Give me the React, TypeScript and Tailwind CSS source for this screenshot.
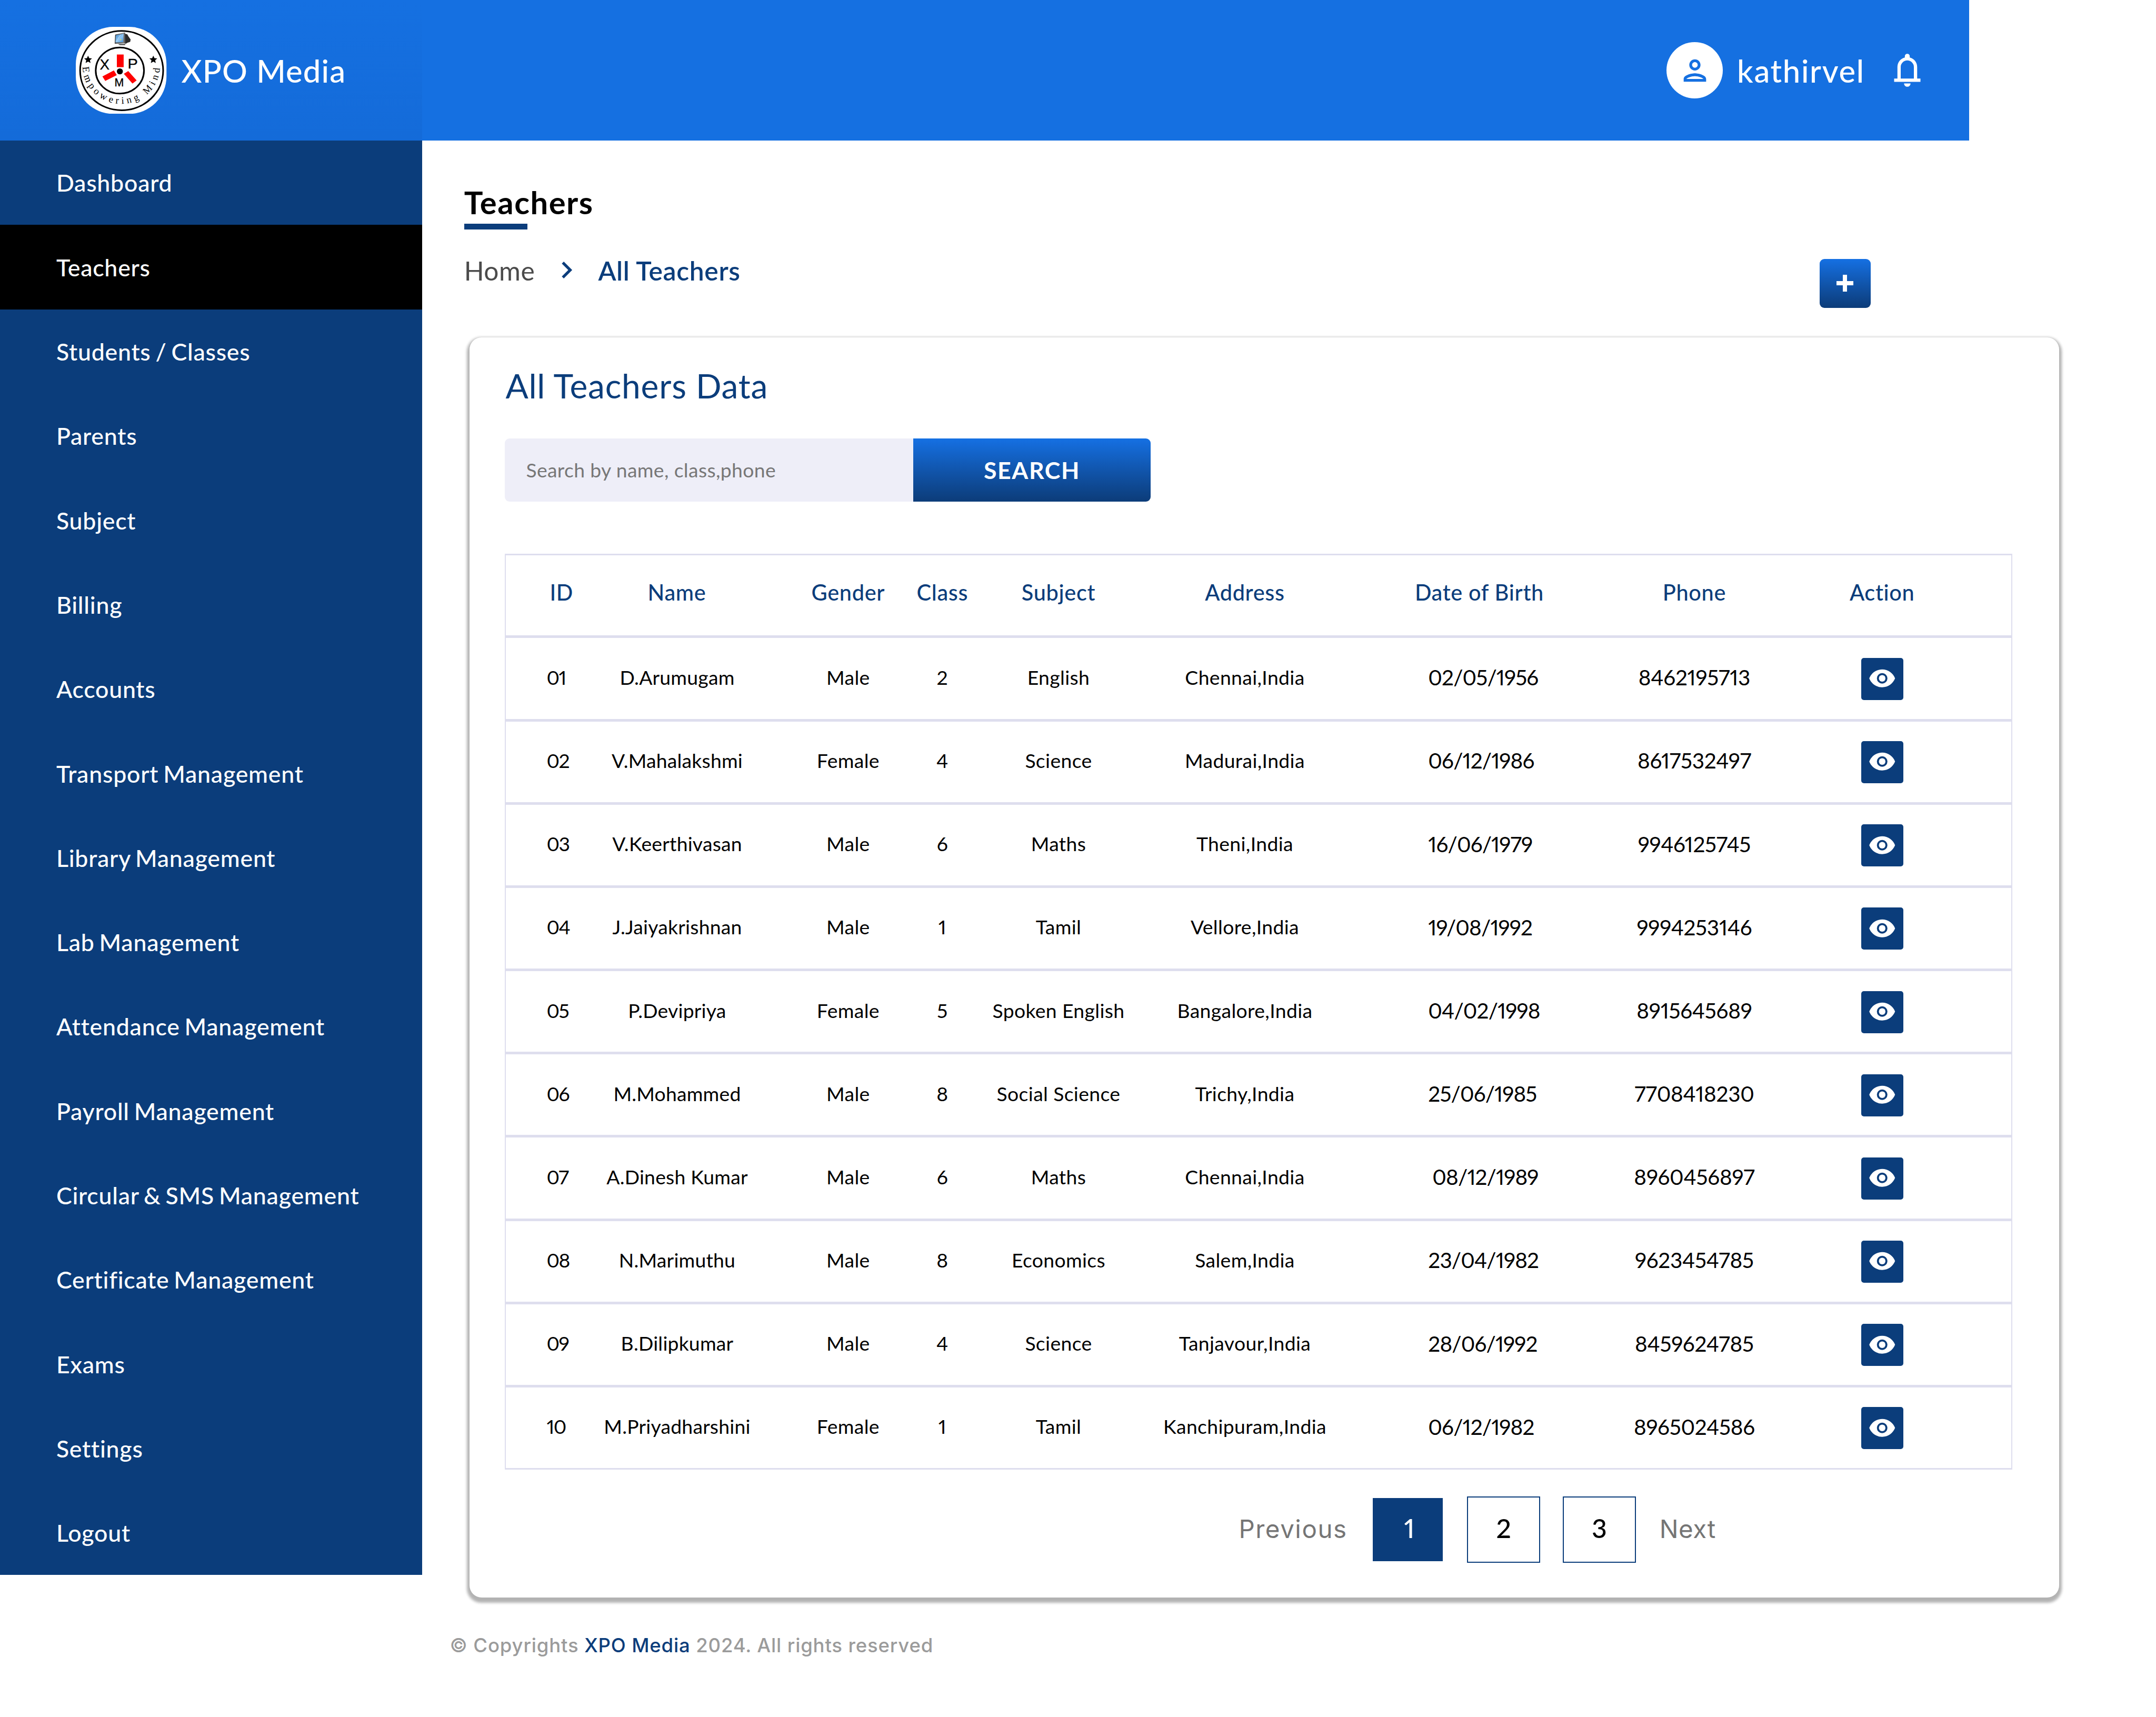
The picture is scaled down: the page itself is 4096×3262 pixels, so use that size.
import { MdOutlinePerson } from 'react-icons/md';

const menu = [
  'Dashboard',
  'Teachers',
  'Students / Classes',
  'Parents',
  'Subject',
  'Billing',
  'Accounts',
  'Transport Management',
  'Library Management',
  'Lab Management',
  'Attendance Management',
  'Payroll Management',
  'Circular & SMS Management',
  'Certificate Management',
  'Exams',
  'Settings',
  'Logout',
];

const columns = ['ID', 'Name', 'Gender', 'Class', 'Subject', 'Address', 'Date of Birth', 'Phone', 'Action'];

const teachers = [
  ['01', 'D.Arumugam', 'Male', '2', 'English', 'Chennai,India', '02/05/1956', '8462195713'],
  ['02', 'V.Mahalakshmi', 'Female', '4', 'Science', 'Madurai,India', '06/12/1986', '8617532497'],
  ['03', 'V.Keerthivasan', 'Male', '6', 'Maths', 'Theni,India', '16/06/1979', '9946125745'],
  ['04', 'J.Jaiyakrishnan', 'Male', '1', 'Tamil', 'Vellore,India', '19/08/1992', '9994253146'],
  ['05', 'P.Devipriya', 'Female', '5', 'Spoken English', 'Bangalore,India', '04/02/1998', '8915645689'],
  ['06', 'M.Mohammed', 'Male', '8', 'Social Science', 'Trichy,India', '25/06/1985', '7708418230'],
  ['07', 'A.Dinesh Kumar', 'Male', '6', 'Maths', 'Chennai,India', '08/12/1989', '8960456897'],
  ['08', 'N.Marimuthu', 'Male', '8', 'Economics', 'Salem,India', '23/04/1982', '9623454785'],
  ['09', 'B.Dilipkumar', 'Male', '4', 'Science', 'Tanjavour,India', '28/06/1992', '8459624785'],
  ['10', 'M.Priyadharshini', 'Female', '1', 'Tamil', 'Kanchipuram,India', '06/12/1982', '8965024586'],
];

const grid =
  'grid grid-cols-[121.2px_402.8px_248px_110px_331.2px_376.8px_514.2px_302.8px_410.8px] items-center justify-items-center whitespace-nowrap pl-[2px]';

function Star({ x, y }: { x: number; y: number }) {
  return (
    <path
      transform={`translate(${x} ${y})`}
      d="M0-8.6 2.5-3.1 8.4-2.6 3.9 1.4 5.3 7.2 0 4.1-5.3 7.2-3.9 1.4-8.4-2.6-2.5-3.1Z"
    />
  );
}

function Logo() {
  return (
    <svg viewBox="162 57 193.5 185.7" className="h-[165.4px] w-[172.3px]">
      <defs>
        <path id="motto" d="M176.5 141.5 A82.5 79.5 0 0 0 341.5 142 L343.5 134" />
        <linearGradient id="screen" x1="0" y1="0" x2="1" y2="1">
          <stop offset="0" stopColor="#3d86c9" />
          <stop offset="0.55" stopColor="#8fc6f3" />
          <stop offset="1" stopColor="#3f8fd8" />
        </linearGradient>
        <linearGradient id="bezel" x1="0" y1="0" x2="1" y2="0">
          <stop offset="0" stopColor="#3a3a3a" />
          <stop offset="0.8" stopColor="#7d7d7d" />
          <stop offset="1" stopColor="#2c2c2c" />
        </linearGradient>
      </defs>
      <rect x="162" y="57" width="193.5" height="185.7" rx="80" fill="#fff" />
      <ellipse cx="259.8" cy="150.3" rx="88.6" ry="84.6" fill="none" stroke="#000" strokeWidth="3.4" />
      <ellipse cx="256" cy="150.2" rx="51.5" ry="49.2" fill="none" stroke="#000" strokeWidth="3.4" />
      <path d="M264 71 272 73 274 77 279 84 278 89 272 91 269 93 262 91Z" fill="#2a2a2a" />
      <path d="M252 93.5H268L267 96 256 96Z" fill="#4d4d4d" />
      <path d="M246 73.5 267 69 269 92 245 93Z" fill="url(#bezel)" />
      <path d="M247.5 75 264 71.5 263 89.5 246.5 90.5Z" fill="url(#screen)" />
      <path d="M249 88 Q254 78 258 74" fill="none" stroke="#cfe6fa" strokeWidth="0.9" />
      <circle cx="257.8" cy="84.5" r="1.6" fill="#c9cf7a" />
      <Star x={188.2} y={127} />
      <Star x={327.4} y={127} />
      <rect x="249.6" y="116" width="14.5" height="27" fill="#f00" />
      <path d="M218.8 162.7 243.3 150 249.4 160 224.9 172.3Z" fill="#f00" />
      <path d="M264.5 157.3 273.9 151.3 291.8 171.3 282.9 178Z" fill="#f00" />
      <circle cx="256" cy="152" r="6.4" />
      <g className="font-['Liberation_Sans',sans-serif]" stroke="#000" strokeWidth="0.4">
        <text x="213" y="148.3" fontSize="31" textLength="22" lengthAdjust="spacingAndGlyphs">
          X
        </text>
        <text x="272.6" y="146" fontSize="29.5" textLength="23" lengthAdjust="spacingAndGlyphs">
          P
        </text>
        <text x="244.6" y="184" fontSize="24">
          M
        </text>
      </g>
      <text className="font-['Liberation_Serif',serif]" fontSize="21" textLength="251">
        <textPath href="#motto" startOffset="1" textLength="251">
          Empowering Mind
        </textPath>
      </text>
    </svg>
  );
}

function Header() {
  return (
    <header className="flex h-[267.2px] w-[3740.6px] items-center justify-between bg-[#1570e1] pr-[80px] text-[59.7px] leading-none font-medium text-white">
      <div className="flex h-full w-[801.6px] items-center gap-[28px] bg-linear-to-b from-[#1570e1] to-[#146bd9] pl-[144.3px] tracking-[0.019em]">
        <Logo />
        <span className="pt-[2px]">XPO Media</span>
      </div>
      <div className="flex items-center">
        <div className="flex size-[107px] items-center justify-center rounded-full bg-white text-[#1570e1]">
          <MdOutlinePerson className="size-[64px]" />
        </div>
        <span className="w-[312.5px] pt-[2px] pl-[27px] tracking-[0.028em]">kathirvel</span>
        <svg viewBox="0 -960 960 960" fill="currentColor" className="size-[75px]">
          <path d="M160-200v-80h80v-280q0-83 50-147.5T420-792v-28q0-25 17.5-42.5T480-880t42.5 17.5T540-820v28q80 20 130 84.5T720-560v280h80v80H160Zm320 120q-33 0-56.5-23.5T400-160h160q0 33-23.5 56.5T480-80ZM320-280h320v-280q0-66-47-113t-113-47q-66 0-113 47t-47 113v280Z" />
        </svg>
      </div>
    </header>
  );
}

function Sidebar() {
  return (
    <nav className="w-[801.6px] shrink-0 self-start bg-[#0b3d7b] text-[44.7px] leading-none font-medium tracking-[0.017em] text-white [word-spacing:-0.07em]">
      {menu.map((item) => (
        <div
          key={item}
          className={`flex h-[160.3px] items-center pt-[1px] pl-[106.9px] ${item === 'Teachers' ? 'bg-black' : ''}`}
        >
          {item}
        </div>
      ))}
    </nav>
  );
}

function ViewButton() {
  return (
    <button className="mt-[7px] flex size-[80px] items-center justify-center rounded-[5px] bg-[#0b3d7b] text-white">
      <svg viewBox="0 0 24 24" fill="currentColor" fillRule="evenodd" className="-mt-[2px] size-[53.5px]">
        <path d="M12 4.4C7 4.4 2.73 7.51 1 12c1.73 4.49 6 7.6 11 7.6s9.27-3.11 11-7.6c-1.73-4.49-6-7.6-11-7.6Zm0 12.1a4.5 4.5 0 1 1 0-9 4.5 4.5 0 0 1 0 9Z" />
        <circle cx="12" cy="12" r="2.8" />
      </svg>
    </button>
  );
}

function TeacherTable() {
  return (
    <div className="mt-[99.2px] h-[1739.3px] w-[2864px] border-x-[2px] border-y-[3px] border-[#dedeee]">
      <div
        className={`${grid} h-[156.9px] border-b-[5px] border-[#dedeee] pb-[11px] text-[41.5px] leading-none font-medium tracking-[0.016em] text-[#0b3d7b]`}
      >
        {columns.map((c) => (
          <span key={c} className="first:justify-self-start first:pl-[81px]">
            {c}
          </span>
        ))}
      </div>
      {teachers.map((row) => (
        <div
          key={row[0]}
          className={`${grid} h-[158.2px] border-b-[5px] border-[#dedeee] pb-[5px] text-[37.3px] leading-none tracking-[0.01em] text-black proportional-nums last:h-[152.6px] last:border-b-0`}
        >
          <span className="justify-self-start pl-[75px] tracking-[-0.04em]">{row[0]}</span>
          <span className="pl-px tracking-[0.006em]">{row[1]}</span>
          {row.slice(2, 6).map((cell, i) => (
            <span key={i}>{cell}</span>
          ))}
          <span
            className={`justify-self-start pt-[2px] text-[40.5px] tracking-[-0.022em] ${row[0] === '07' ? 'pl-[168px]' : 'pl-[160px]'}`}
          >
            {row[6]}
          </span>
          <span className="pt-[2px] text-[40.5px] tracking-[-0.006em]">{row[7]}</span>
          <ViewButton />
        </div>
      ))}
    </div>
  );
}

function Pagination() {
  return (
    <div className="mt-[51.7px] flex h-[125.3px] items-center pl-[1394px] text-[50px] leading-none font-medium text-black proportional-nums">
      <span className="w-[254.3px] pb-[2px] font-[Inter,sans-serif] text-[47.5px] font-normal tracking-[0.032em] text-[#757575]">
        Previous
      </span>
      <span className="flex h-[120.6px] w-[133.4px] items-center justify-center bg-[#0b3d7b] pb-[6px] pl-[6px] text-white">
        1
      </span>
      <span className="ml-[46.3px] flex h-full w-[138.7px] items-center justify-center border-[2px] border-[#0b3d7b] pb-[6px]">
        2
      </span>
      <span className="ml-[43px] flex h-full w-[138.7px] items-center justify-center border-[2px] border-[#0b3d7b] pb-[6px]">
        3
      </span>
      <span className="ml-[45px] pb-[2px] font-[Inter,sans-serif] text-[47.5px] font-normal tracking-[0.012em] text-[#757575]">
        Next
      </span>
    </div>
  );
}

export default function App() {
  return (
    <div className="h-[3262px] w-[4096px] overflow-hidden bg-white font-[Lato,sans-serif]">
      <Header />
      <div className="flex">
        <Sidebar />
        <main>
          <div className="pt-[86.7px] pl-[80.1px]">
            <h1 className="text-[59.7px] leading-[60px] font-bold tracking-[0.026em] text-black">Teachers</h1>
            <div className="mt-[11px] h-[10.7px] w-[120px] bg-[#0b3d7b]" />
            <div className="mt-[53.3px] flex h-[152.1px] items-start text-[49.7px] leading-[50px] text-[#0b3d7b]">
              <span className="w-[164.7px] tracking-[0.01em] text-[#4b4b4b]">Home</span>
              <svg viewBox="0 -960 960 960" fill="currentColor" className="-mt-[8px] size-[64px]">
                <path d="M504-480 320-664l56-56 240 240-240 240-56-56 184-184Z" />
              </svg>
              <span className="ml-[26px] w-[2320.6px] font-semibold tracking-[0.014em]">All Teachers</span>
              <button className="mt-[2.8px] flex h-[93.5px] w-[97px] items-center justify-center rounded-[9px] bg-linear-to-b from-[#1570e3] to-[#0c3c79] text-white">
                <svg viewBox="0 0 32 32" fill="none" stroke="currentColor" strokeWidth="8" className="size-[32px]">
                  <path d="M16 0V32M0 16H32" />
                </svg>
              </button>
            </div>
          </div>

          <section className="ml-[90.8px] h-[2394px] w-[3020px] rounded-[23px] bg-white pt-[60px] pl-[67px] shadow-[0_5.3px_5.3px_4.4px_rgba(0,0,0,0.3)]">
            <h2 className="pl-px text-[64px] leading-[64px] tracking-[0.013em] text-[#0b3d7b]">All Teachers Data</h2>
            <div className="mt-[67.6px] flex h-[120.7px] leading-none">
              <div className="flex w-[775.7px] items-center rounded-l-[9px] bg-[#eeeef8] pb-[1px] pl-[40px] text-[37.3px] tracking-[0.01em] text-[#777777]">
                Search by name, class,phone
              </div>
              <button className="w-[450.8px] rounded-r-[9px] bg-linear-to-b from-[#1570e3] to-[#0c3c79] pt-[1px] text-[44.7px] font-bold tracking-[0.036em] text-white">
                SEARCH
              </button>
            </div>
            <TeacherTable />
            <Pagination />
          </section>

          <footer className="mt-[71.3px] ml-[53px] font-[Inter,sans-serif] text-[36.5px] leading-[40px] font-medium tracking-[0.023em] whitespace-pre text-[#9b9b9b]">
            © Copyrights <span className="text-[#0b3d7b]">XPO Media</span> 2024. All rights reserved
          </footer>
        </main>
      </div>
    </div>
  );
}
